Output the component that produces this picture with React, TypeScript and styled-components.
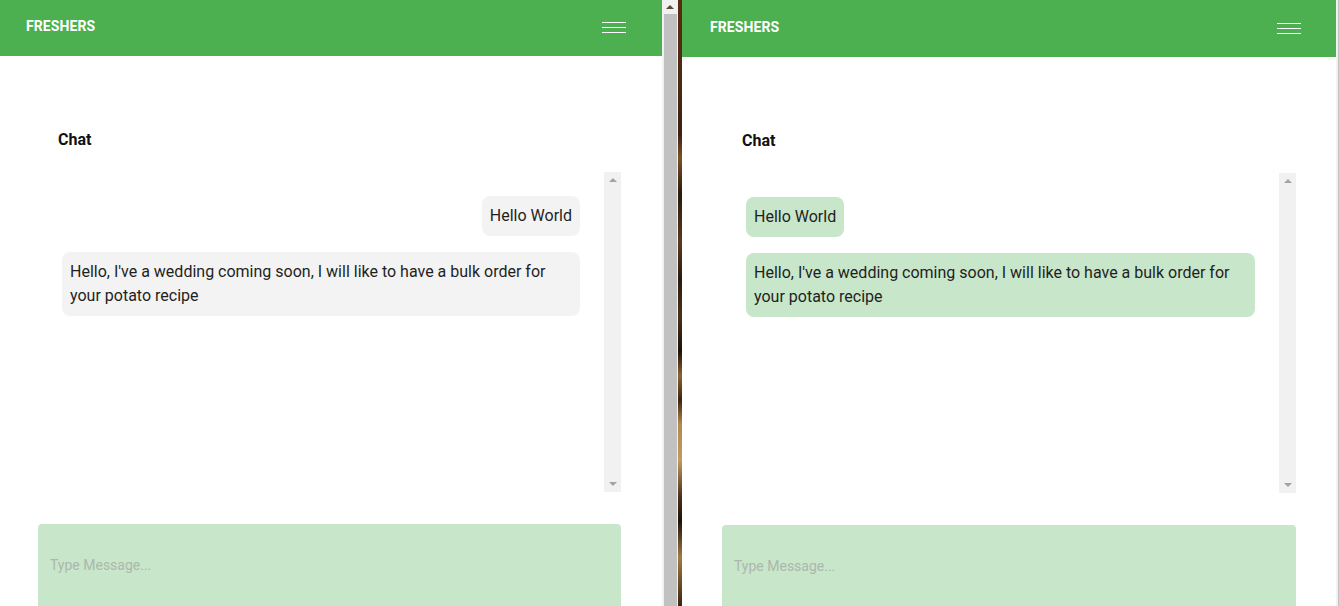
import React from "react";
import styled, { createGlobalStyle } from "styled-components";

const GlobalStyle = createGlobalStyle`
  html, body {
    margin: 0;
    padding: 0;
    background: #ffffff;
  }
  body {
    font-family: Roboto, "Liberation Sans", Arial, sans-serif;
    overflow: hidden;
  }
  * {
    box-sizing: border-box;
  }
`;

type Side = "left" | "right";

const Desktop = styled.div`
  display: flex;
  width: 1339px;
  height: 606px;
  overflow: hidden;
`;

const Pane = styled.div<{ $side: Side }>`
  display: flex;
  flex-direction: column;
  width: ${(p) => (p.$side === "left" ? "662px" : "654px")};
  flex-shrink: 0;
  background: #ffffff;
  overflow: hidden;
`;

const Header = styled.header<{ $side: Side }>`
  display: flex;
  align-items: center;
  justify-content: space-between;
  height: ${(p) => (p.$side === "left" ? "56px" : "57px")};
  padding: ${(p) => (p.$side === "left" ? "0 36px 5px 26px" : "0 35px 4px 28px")};
  background: #4caf50;
  flex-shrink: 0;
`;

const Brand = styled.div`
  color: #ffffff;
  font-weight: 700;
  font-size: 14px;
  letter-spacing: 0.1px;
`;

const Burger = styled.div`
  display: flex;
  flex-direction: column;
  gap: 4px;
  width: 24px;
  margin-top: 4px;
`;

const BurgerLine = styled.span`
  display: block;
  height: 1px;
  background: #ffffff;
`;

const Main = styled.main<{ $side: Side }>`
  display: flex;
  flex-direction: column;
  padding: ${(p) => (p.$side === "left" ? "0 41px 0 38px" : "0 40px 0 40px")};
`;

const Title = styled.h2`
  margin: 72px 0 0 20px;
  font-size: 16px;
  line-height: 24px;
  font-weight: 700;
  color: #111111;
`;

const ChatBox = styled.div`
  display: flex;
  height: 320px;
  margin-top: 20px;
`;

const MessageList = styled.div<{ $side: Side }>`
  flex: 1;
  display: flex;
  flex-direction: column;
  align-items: ${(p) => (p.$side === "left" ? "flex-end" : "flex-start")};
  gap: 16px;
  padding: 24px;
  min-width: 0;
`;

const Bubble = styled.div<{ $side: Side }>`
  max-width: 100%;
  padding: 8px;
  border-radius: 8px;
  font-size: 16px;
  line-height: 24px;
  color: #1f1f1f;
  background: ${(p) => (p.$side === "left" ? "#f3f3f3" : "#c8e6c9")};
`;

const Track = styled.div`
  display: flex;
  flex-direction: column;
  justify-content: space-between;
  align-items: center;
  width: 17px;
  padding: 6px 0;
  background: #f1f1f1;
  flex-shrink: 0;
`;

const Arrow = styled.span<{ $down?: boolean; $color?: string }>`
  width: 0;
  height: 0;
  border-left: 4px solid transparent;
  border-right: 4px solid transparent;
  ${(p) =>
    p.$down
      ? `border-top: 4px solid ${p.$color || "#a3a3a3"};`
      : `border-bottom: 4px solid ${p.$color || "#a3a3a3"};`}
`;

const MessageInput = styled.input`
  height: 82px;
  margin-top: 32px;
  padding: 0 12px;
  border: none;
  border-radius: 4px 4px 0 0;
  background: #c8e6c9;
  font-family: Roboto, "Liberation Sans", Arial, sans-serif;
  font-size: 14px;
  color: #333;
  outline: none;

  &::placeholder {
    color: #adb7ad;
  }
`;

const WindowScroll = styled.div`
  display: flex;
  flex-direction: column;
  align-items: center;
  width: 16px;
  flex-shrink: 0;
  background: #f1f1f1;
`;

const ArrowCell = styled.div`
  display: flex;
  align-items: center;
  justify-content: center;
  height: 13px;
`;

const Thumb = styled.div`
  flex: 1;
  width: 13px;
  margin-top: 1px;
  background: #c1c1c1;
`;

const Wood = styled.div`
  width: 4px;
  flex-shrink: 0;
  background: linear-gradient(
    to bottom,
    #5a2a12 0%,
    #4a2a14 14%,
    #3b2010 22%,
    #7a5228 26%,
    #2a1a0c 32%,
    #5a3a1c 40%,
    #2b1a0e 46%,
    #4a3018 52%,
    #1e1208 58%,
    #8a6434 62%,
    #3a2410 66%,
    #b08a50 70%,
    #c09a60 76%,
    #4a3018 82%,
    #1e1208 86%,
    #a07c44 92%,
    #3a2410 100%
  );
`;

const EdgeScroll = styled.div`
  width: 3px;
  flex-shrink: 0;
  background: linear-gradient(to right, #f1f1f1 0 2px, #c1c1c1 2px 3px);
`;

const messages = [
  "Hello World",
  "Hello, I've a wedding coming soon, I will like to have a bulk order for your potato recipe",
];

function ChatWindow({ side }: { side: Side }) {
  return (
    <Pane $side={side}>
      <Header $side={side}>
        <Brand>FRESHERS</Brand>
        <Burger>
          <BurgerLine />
          <BurgerLine />
          <BurgerLine />
        </Burger>
      </Header>
      <Main $side={side}>
        <Title>Chat</Title>
        <ChatBox>
          <MessageList $side={side}>
            {messages.map((m) => (
              <Bubble key={m} $side={side}>
                {m}
              </Bubble>
            ))}
          </MessageList>
          <Track>
            <Arrow />
            <Arrow $down />
          </Track>
        </ChatBox>
        <MessageInput placeholder="Type Message..." />
      </Main>
    </Pane>
  );
}

export default function App() {
  return (
    <>
      <GlobalStyle />
      <Desktop>
        <ChatWindow side="left" />
        <WindowScroll>
          <ArrowCell>
            <Arrow $color="#5a4634" />
          </ArrowCell>
          <Thumb />
        </WindowScroll>
        <Wood />
        <ChatWindow side="right" />
        <EdgeScroll />
      </Desktop>
    </>
  );
}
